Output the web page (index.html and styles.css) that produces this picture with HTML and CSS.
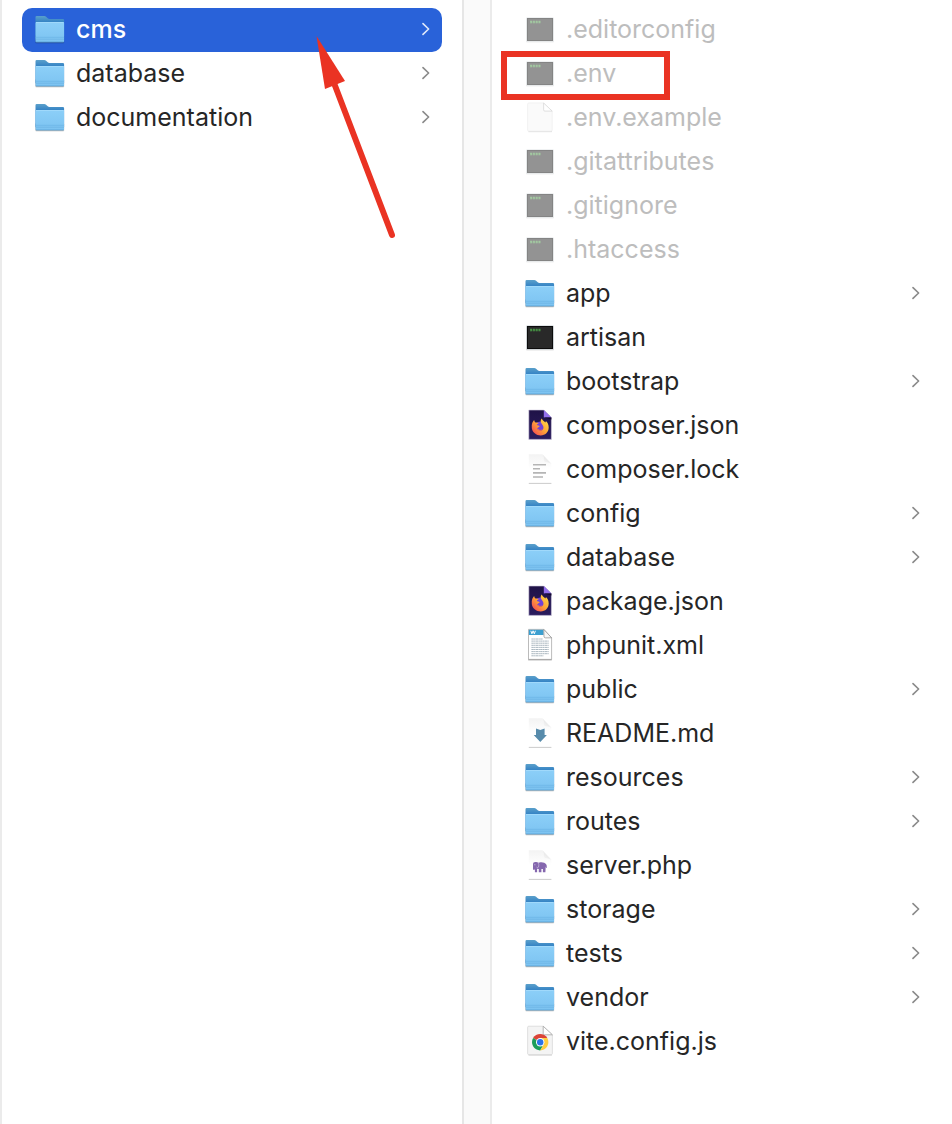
FILE: index.html
```html
<!DOCTYPE html>
<html lang="en">
<head>
    <meta charset="UTF-8">
    <meta name="viewport" content="width=device-width, initial-scale=1.0">
    <title>cms</title>
    <link rel="stylesheet" href="styles.css">
</head>
<body>
<svg class="sprite" aria-hidden="true">
    <defs>
        <linearGradient id="folderFront" x1="0" y1="0" x2="0" y2="1">
            <stop offset="0" stop-color="#8ccff8"/>
            <stop offset="1" stop-color="#7cc3f1"/>
        </linearGradient>
        <linearGradient id="folderBack" x1="0" y1="0" x2="0" y2="1">
            <stop offset="0" stop-color="#5ba0cb"/>
            <stop offset="0.3" stop-color="#2f7fc4"/>
        </linearGradient>
        <linearGradient id="paper" x1="0" y1="0" x2="0" y2="1">
            <stop offset="0" stop-color="#f3f3f3"/>
            <stop offset="0.5" stop-color="#ffffff"/>
        </linearGradient>
        <linearGradient id="fold" x1="0" y1="1" x2="1" y2="0">
            <stop offset="0" stop-color="#fefefe"/>
            <stop offset="1" stop-color="#c4c4c4"/>
        </linearGradient>
        <linearGradient id="night" x1="0" y1="0" x2="0" y2="1">
            <stop offset="0" stop-color="#1f1247"/>
            <stop offset="1" stop-color="#2a1c5e"/>
        </linearGradient>
        <linearGradient id="flame" x1="1" y1="0" x2="0" y2="1">
            <stop offset="0" stop-color="#ffe14a"/>
            <stop offset="0.5" stop-color="#ffa436"/>
            <stop offset="1" stop-color="#f2375b"/>
        </linearGradient>
    </defs>

    <symbol id="folder" viewBox="0 0 30 30" overflow="visible">
        <rect x="0.3" y="20" width="28.9" height="8.4" rx="1.2" fill="#000" opacity="0.14"/>
        <rect x="0.6" y="20" width="28.3" height="7.8" rx="1" fill="#000" opacity="0.25"/>
        <path d="M0.5 2.2q0-1.2 1.2-1.2h7.6q1 0 1.8 0.8l1.6 1.4q0.8 0.8 1.8 0.8h13.4q1.2 0 1.2 1.2V24H0.5z" fill="url(#folderBack)"/>
        <path d="M0.5 8q0-1 1-1h26.6q1 0 1 1v18.2q0 1-1 1H1.5q-1 0-1-1z" fill="url(#folderFront)"/>
        <path d="M1 7.5h27.6" stroke="#a6dcfb" stroke-width="0.8"/>
        <path d="M0.6 22.3h28.4M0.6 24.2h28.4" stroke="#66afe0" stroke-width="0.6"/>
        <path d="M0.8 26.9h28" stroke="#529cd0" stroke-width="0.6"/>
    </symbol>

    <symbol id="terminal" viewBox="0 0 30 30" overflow="visible">
        <rect x="1" y="3" width="28" height="24.4" rx="1" fill="#000" opacity="0.12"/>
        <rect x="1.4" y="2.6" width="27.2" height="24" rx="0.5" fill="#c3cbd0"/>
        <rect x="2" y="3" width="26" height="23" fill="#0c0c0c"/>
        <rect x="3" y="4" width="24" height="21" fill="#292929"/>
        <path d="M5 7h10.6" stroke="#4c9a49" stroke-width="2.4" stroke-dasharray="2.1 0.7"/>
        <path d="M5 7.2h10.6" stroke="#2b542b" stroke-width="0.6" stroke-dasharray="1 0.6"/>
    </symbol>

    <symbol id="blank" viewBox="0 0 30 30" overflow="visible">
        <path d="M3.5 28.6h23.4" stroke="#000" stroke-width="0.9" opacity="0.35"/>
        <path d="M4 0h14.6l8.6 8.2V27q0 1.2-1.2 1.2H3.8q-1.2 0-1.2-1.2V1.2Q2.6 0 4 0z" fill="#f6f6f6" stroke="#dedede" stroke-width="0.7"/>
        <path d="M18.6 0v6.8q0 1.3 1.3 1.3h7.3z" fill="#fff" stroke="#b4b4b4" stroke-width="0.8"/>
    </symbol>

    <symbol id="firefox" viewBox="0 0 30 30" overflow="visible">
        <path d="M3.8-1h15l7.6 7.6V28.4H3.8z" fill="url(#night)" stroke="#d5cfe0" stroke-width="0.6"/>
        <path d="M18.8-1v7.6h7.6z" fill="#9470ee"/>
        <path d="M18.8 6.6h7.6v2z" fill="#130a30"/>
        <circle cx="15.4" cy="16.6" r="6.2" fill="#7242d8"/>
        <path d="M7.2 12c0.6-1.2 1-2 2-3 0.1 1.2 0.6 2 1.3 2.6 1.4-0.4 2.5-0.1 3.4 0.6-1.2 0.4-1.9 1.1-2.2 1.9 1.1 0.3 2 0.6 3 0.9-0.2 1.2-2.2 1.5-2.5 2.6 0.6 1.9 2.7 2.6 4.5 1.8 1.9-0.9 2.4-3.2 1-5.2-0.8-1.2-1.6-1.8-1.9-3.1-0.3-1.4 0.1-2.5 1-3.5 0.6 1.9 2.3 2.6 3.5 4 0.5-0.4 0.6-1 0.6-1.6 1.8 1.6 2.8 3.9 2.8 6.5 0 4.7-3.6 7.9-8 7.9s-8.5-3.2-8.9-7.5c-0.2-1.8 0-3.5 0.4-4.9z" fill="url(#flame)"/>
        <path d="M12.8 17.9c0.8 1.5 2.5 1.9 4 1.1" fill="none" stroke="#ff7139" stroke-width="1"/>
    </symbol>

    <symbol id="text" viewBox="0 0 30 30" overflow="visible">
        <path d="M3.8-0.8h13.4l9.2 9V28.4H3.8z" fill="url(#paper)"/>
        <path d="M17.4-0.8q1.8 2 1.4 6.4 0.2 1.6 2 1.7 4-0.3 5.6 1.7z" fill="url(#fold)" opacity="0.6"/>
        <path d="M3.8 28.4h22.6" stroke="#bebebe" stroke-width="0.8"/>
        <path d="M8 9.8h13M8 13.8h7M8 17.9h13M8 22h10" stroke="#b5b5b5" stroke-width="1.6"/>
    </symbol>

    <symbol id="xml" viewBox="0 0 30 30" overflow="visible">
        <path d="M3.5-1.6h15.3l7.8 8.4V28.4H3.5z" fill="#fff" stroke="#a9a9a9" stroke-width="0.8"/>
        <path d="M3.9-1.2h14.7v5.2H3.9z" fill="#3c9fd0"/>
        <path d="M5.8-0.2l1.1 3 1.2-3 1.2 3 1.1-3" fill="none" stroke="#fff" stroke-width="1"/>
        <path d="M18.8-1.6l0.2 7q0.1 1.5 1.6 1.5l6-0.1z" fill="#f7f7f7" stroke="#8e8e8e" stroke-width="0.7"/>
        <path d="M6.4 8h11.4M6.4 10.1h17.4M6.4 12.2h17.4M6.4 14.3h17.4M6.4 16.4h17.4M6.4 18.5h17.4M6.4 20.6h17.4M6.4 22.7h17.4M6.4 24.8h12" stroke="#a0afb9" stroke-width="0.9" stroke-dasharray="2.4 0.3 1.4 0.3"/>
        <path d="M3.2 28.9h23.6" stroke="#8a8a8a" stroke-width="0.7"/>
    </symbol>

    <symbol id="markdown" viewBox="0 0 30 30" overflow="visible">
        <path d="M3.8-0.8h13.4l9.2 9V28.4H3.8z" fill="url(#paper)"/>
        <path d="M17.4-0.8q1.8 2 1.4 6.4 0.2 1.6 2 1.7 4-0.3 5.6 1.7z" fill="url(#fold)" opacity="0.6"/>
        <path d="M3.8 28.4h22.6" stroke="#bebebe" stroke-width="0.8"/>
        <path d="M11 9.4l4.3 1.7 4.3-1.7v6.6h2.3l-6.6 7-6.6-7H11z" fill="#578bab"/>
    </symbol>

    <symbol id="php" viewBox="0 0 30 30" overflow="visible">
        <path d="M3.8-0.8h13.4l9.2 9V28.4H3.8z" fill="url(#paper)"/>
        <path d="M17.4-0.8q1.8 2 1.4 6.4 0.2 1.6 2 1.7 4-0.3 5.6 1.7z" fill="url(#fold)" opacity="0.6"/>
        <path d="M3.8 28.4h22.6" stroke="#bebebe" stroke-width="0.8"/>
        <path d="M8 13q0-1.8 2.2-1.9 2-0.3 3.2 0.6 1-0.6 3-0.4 3.4 0 4.6 1.8 1 1.4 0.8 3.6l-0.7 0.2-0.4-1.5-0.3 5.9h-2.5v-3.2h-1.5v3.2h-2.6v-3.2l-1.7-0.4v3.6h-2.2v-3.5q-0.4 1.8-1.4 1.1-0.8-0.7-0.5-2.6z" fill="#8567ae"/>
        <path d="M13.2 11.9q1.2 1.6 0.3 4.2-1.2 0.9-2 0" fill="none" stroke="#d5c9e6" stroke-width="0.6"/>
        <circle cx="9.9" cy="13.7" r="0.5" fill="#e7e0f0"/>
    </symbol>

    <symbol id="chrome" viewBox="0 0 30 30" overflow="visible">
        <path d="M3.5 28h23.4" stroke="#000" stroke-width="0.8" opacity="0.25"/>
        <path d="M3.8-0.8h14.4l9.2 8.6V26.4q0 1.2-1.2 1.2H3.8q-1.2 0-1.2-1.2V0.4Q2.6-0.8 3.8-0.8z" fill="#f4f4f4" stroke="#d4d4d4" stroke-width="0.7"/>
        <path d="M18.2-0.8v7.4q0 1.2 1.2 1.2h8z" fill="#fff" stroke="#a4a4a4" stroke-width="0.8"/>
        <path d="M15.2 15.2L8.1 11.1A8.2 8.2 0 0 1 22.3 11.1z" fill="#db4437"/>
        <path d="M15.2 15.2L8.1 11.1A8.2 8.2 0 0 0 15.2 23.4l3.6-6.2z" fill="#1b9e5a"/>
        <path d="M15.2 23.4A8.2 8.2 0 0 0 22.3 11.1h-7.1l3.6 6.1z" fill="#ffcd40"/>
        <circle cx="15.2" cy="15.2" r="4.2" fill="#fff"/>
        <circle cx="15.2" cy="15.2" r="3.2" fill="#2a73e8"/>
    </symbol>

    <symbol id="chevron" viewBox="0 0 8 14">
        <path d="M1 1.6l5.6 5.4L1 12.4" fill="none" stroke="currentColor" stroke-width="1.6" stroke-linecap="round" stroke-linejoin="round"/>
    </symbol>
</svg>

<main class="browser">
    <section class="column">
        <ul class="files">
            <li><a href="#" class="row selected"><svg class="icon"><use href="#folder"/></svg><span class="name">cms</span><svg class="chevron"><use href="#chevron"/></svg></a></li>
            <li><a href="#" class="row"><svg class="icon"><use href="#folder"/></svg><span class="name">database</span><svg class="chevron"><use href="#chevron"/></svg></a></li>
            <li><a href="#" class="row"><svg class="icon"><use href="#folder"/></svg><span class="name">documentation</span><svg class="chevron"><use href="#chevron"/></svg></a></li>
        </ul>
        <svg class="arrow" viewBox="0 0 80 204" aria-hidden="true">
            <path d="M1.5-1l28.5 45-20 8z" fill="#ea3323"/>
            <path d="M19 46l58 152" stroke="#ea3323" stroke-width="6" stroke-linecap="round"/>
        </svg>
    </section>

    <div class="gutter"></div>

    <section class="column">
        <ul class="files">
            <li><a href="#" class="row hidden-file"><svg class="icon"><use href="#terminal"/></svg><span class="name">.editorconfig</span></a></li>
            <li class="marked"><a href="#" class="row hidden-file"><svg class="icon"><use href="#terminal"/></svg><span class="name">.env</span></a></li>
            <li><a href="#" class="row hidden-file"><svg class="icon"><use href="#blank"/></svg><span class="name">.env.example</span></a></li>
            <li><a href="#" class="row hidden-file"><svg class="icon"><use href="#terminal"/></svg><span class="name">.gitattributes</span></a></li>
            <li><a href="#" class="row hidden-file"><svg class="icon"><use href="#terminal"/></svg><span class="name">.gitignore</span></a></li>
            <li><a href="#" class="row hidden-file"><svg class="icon"><use href="#terminal"/></svg><span class="name">.htaccess</span></a></li>
            <li><a href="#" class="row"><svg class="icon"><use href="#folder"/></svg><span class="name">app</span><svg class="chevron"><use href="#chevron"/></svg></a></li>
            <li><a href="#" class="row"><svg class="icon"><use href="#terminal"/></svg><span class="name">artisan</span></a></li>
            <li><a href="#" class="row"><svg class="icon"><use href="#folder"/></svg><span class="name">bootstrap</span><svg class="chevron"><use href="#chevron"/></svg></a></li>
            <li><a href="#" class="row"><svg class="icon"><use href="#firefox"/></svg><span class="name">composer.json</span></a></li>
            <li><a href="#" class="row"><svg class="icon"><use href="#text"/></svg><span class="name">composer.lock</span></a></li>
            <li><a href="#" class="row"><svg class="icon"><use href="#folder"/></svg><span class="name">config</span><svg class="chevron"><use href="#chevron"/></svg></a></li>
            <li><a href="#" class="row"><svg class="icon"><use href="#folder"/></svg><span class="name">database</span><svg class="chevron"><use href="#chevron"/></svg></a></li>
            <li><a href="#" class="row"><svg class="icon"><use href="#firefox"/></svg><span class="name">package.json</span></a></li>
            <li><a href="#" class="row"><svg class="icon"><use href="#xml"/></svg><span class="name">phpunit.xml</span></a></li>
            <li><a href="#" class="row"><svg class="icon"><use href="#folder"/></svg><span class="name">public</span><svg class="chevron"><use href="#chevron"/></svg></a></li>
            <li><a href="#" class="row"><svg class="icon"><use href="#markdown"/></svg><span class="name">README.md</span></a></li>
            <li><a href="#" class="row"><svg class="icon"><use href="#folder"/></svg><span class="name">resources</span><svg class="chevron"><use href="#chevron"/></svg></a></li>
            <li><a href="#" class="row"><svg class="icon"><use href="#folder"/></svg><span class="name">routes</span><svg class="chevron"><use href="#chevron"/></svg></a></li>
            <li><a href="#" class="row"><svg class="icon"><use href="#php"/></svg><span class="name">server.php</span></a></li>
            <li><a href="#" class="row"><svg class="icon"><use href="#folder"/></svg><span class="name">storage</span><svg class="chevron"><use href="#chevron"/></svg></a></li>
            <li><a href="#" class="row"><svg class="icon"><use href="#folder"/></svg><span class="name">tests</span><svg class="chevron"><use href="#chevron"/></svg></a></li>
            <li><a href="#" class="row"><svg class="icon"><use href="#folder"/></svg><span class="name">vendor</span><svg class="chevron"><use href="#chevron"/></svg></a></li>
            <li><a href="#" class="row"><svg class="icon"><use href="#chrome"/></svg><span class="name">vite.config.js</span></a></li>
        </ul>
    </section>
</main>
</body>
</html>
```
FILE: styles.css
```css
* {
    box-sizing: border-box;
}

body {
    margin: 0;
    background-color: #fff;
    color: #262626;
    font-family: Inter, "Liberation Sans", sans-serif;
    font-size: 25px;
    line-height: 44px;
}

.sprite {
    position: absolute;
    width: 0;
    height: 0;
}

.browser {
    display: grid;
    grid-template-columns: 1fr 28px 1fr;
    min-height: 100vh;
}

.column {
    position: relative;
    border-left: 2px solid #ebebeb;
    padding: 8px 20px;
}

.gutter {
    border-left: 2px solid #e6e6e6;
    background-color: #fafafa;
}

.files {
    list-style: none;
    margin: 0;
    padding: 0;
}

.row {
    display: flex;
    align-items: center;
    gap: 11px;
    height: 44px;
    padding: 0 12px 0 13px;
    border-radius: 10px;
    color: inherit;
    text-decoration: none;
}

.selected {
    background-color: #2962d9;
    color: #fff;
    font-weight: 500;
}

.icon {
    flex: none;
    width: 30px;
    height: 30px;
    overflow: visible;
}

.name {
    flex: 1;
    white-space: nowrap;
    padding-bottom: 2px;
}

.chevron {
    flex: none;
    width: 8px;
    height: 14px;
    margin-bottom: 2px;
    color: #8a8a8a;
}

.selected .chevron {
    color: #dfe8fa;
}

.hidden-file {
    color: #bdbdbd;
}

.hidden-file .icon {
    opacity: 0.5;
}

/* red marks drawn over the list */
.marked {
    position: relative;
}

.marked::after {
    content: "";
    box-sizing: border-box;
    position: absolute;
    left: -11px;
    top: -1px;
    width: 169px;
    height: 49px;
    border: 6px solid #ea3323;
    pointer-events: none;
}

.arrow {
    position: absolute;
    left: 313px;
    top: 37px;
    width: 80px;
    height: 204px;
    overflow: visible;
    pointer-events: none;
}
```
